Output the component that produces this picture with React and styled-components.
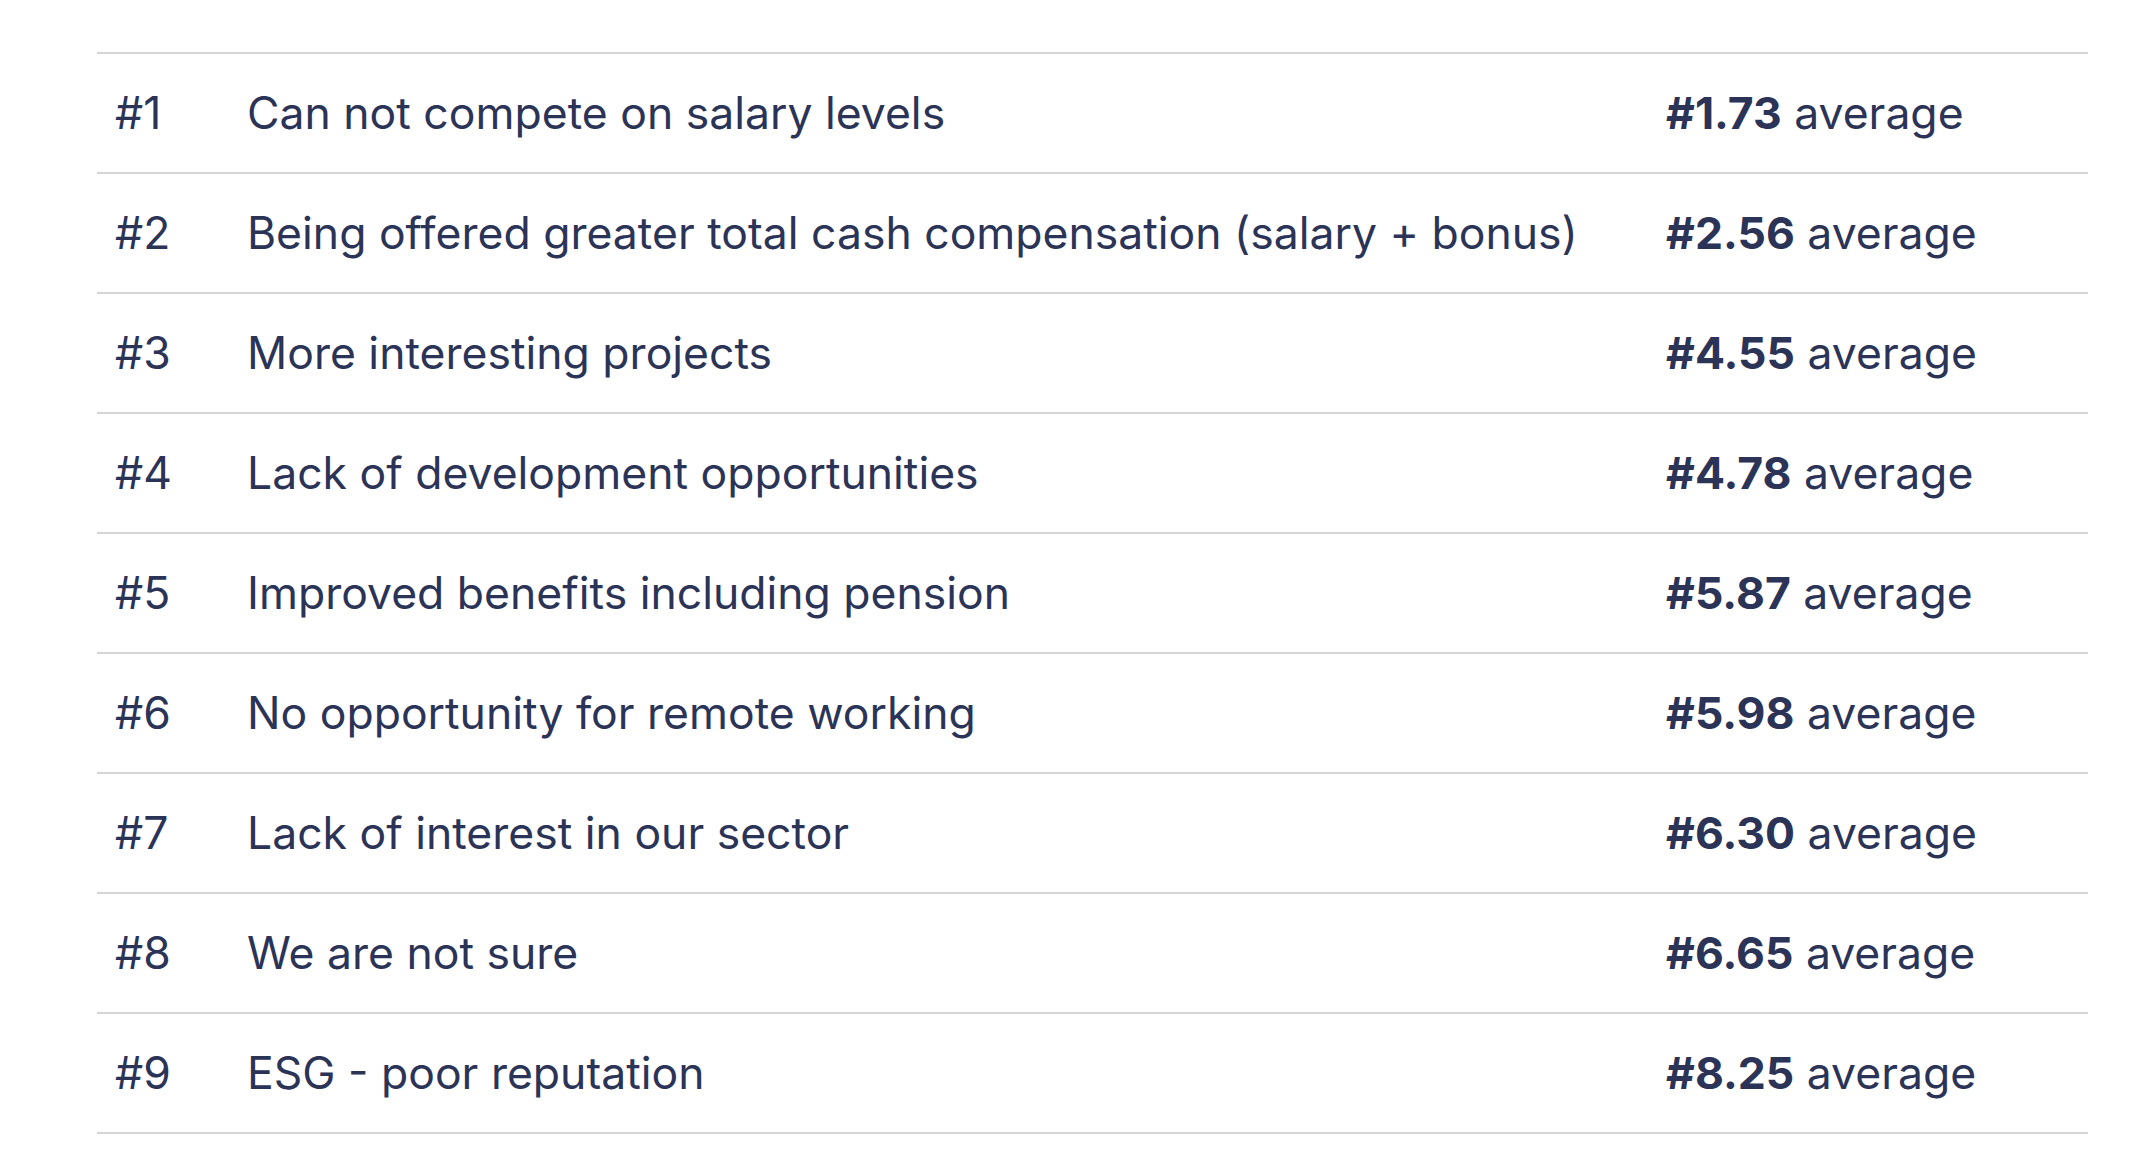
import React from "react";
import styled, { createGlobalStyle } from "styled-components";

const GlobalStyle = createGlobalStyle`
  html, body {
    margin: 0;
    padding: 0;
    background: #ffffff;
  }
  body {
    font-family: Inter, "Noto Sans", "Liberation Sans", sans-serif;
    color: #2b3457;
  }
`;

const Page = styled.div`
  height: 1166px;
  overflow: hidden;
  padding: 52px 66px 0 97px;
  box-sizing: border-box;
`;

const Table = styled.div`
  display: flex;
  flex-direction: column;
  border-top: 2px solid #d4d4d4;
`;

const Row = styled.div`
  display: grid;
  grid-template-columns: 132px 1fr 422px;
  align-items: center;
  height: 118px;
  padding-left: 18px;
  border-bottom: 2px solid #d4d4d4;
  font-size: 44.5px;
  line-height: 1;
`;

const Rank = styled.div`
  font-weight: 400;
`;

const Reason = styled.div`
  font-weight: 400;
  white-space: nowrap;
`;

const Average = styled.div`
  white-space: nowrap;
  font-weight: 400;

  strong {
    font-weight: 700;
  }
`;

const reasons = [
  { rank: 1, text: "Can not compete on salary levels", avg: "1.73" },
  { rank: 2, text: "Being offered greater total cash compensation (salary + bonus)", avg: "2.56" },
  { rank: 3, text: "More interesting projects", avg: "4.55" },
  { rank: 4, text: "Lack of development opportunities", avg: "4.78" },
  { rank: 5, text: "Improved benefits including pension", avg: "5.87" },
  { rank: 6, text: "No opportunity for remote working", avg: "5.98" },
  { rank: 7, text: "Lack of interest in our sector", avg: "6.30" },
  { rank: 8, text: "We are not sure", avg: "6.65" },
  { rank: 9, text: "ESG - poor reputation", avg: "8.25" },
  { rank: 10, text: "Other", avg: "9.10" },
];

const App = () => {
  return (
    <>
      <GlobalStyle />
      <Page>
        <Table>
          {reasons.map((r) => (
            <Row key={r.rank}>
              <Rank>#{r.rank}</Rank>
              <Reason>{r.text}</Reason>
              <Average>
                <strong>#{r.avg}</strong> average
              </Average>
            </Row>
          ))}
        </Table>
      </Page>
    </>
  );
};

export default App;
